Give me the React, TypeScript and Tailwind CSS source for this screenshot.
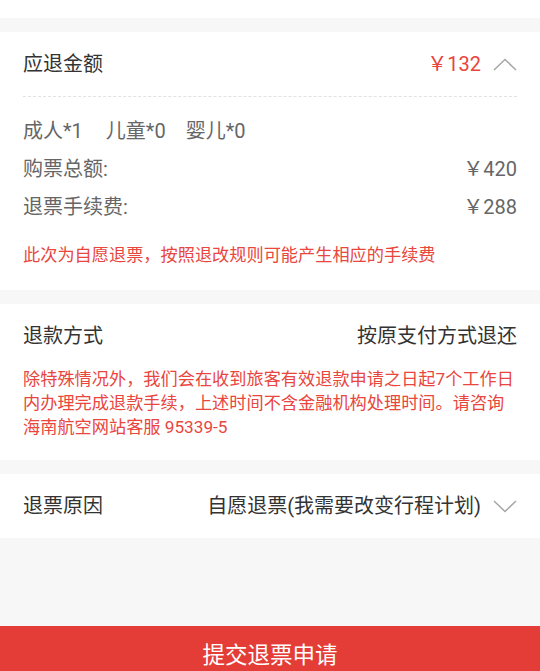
import React from 'react';

const font = { fontFamily: 'Roboto, "Noto Sans CJK SC", sans-serif' };

const Chevron = ({ up }: { up?: boolean }) => (
  <svg width="24" height="13" viewBox="0 0 24 13" className="ml-3 shrink-0">
    <polyline
      points={up ? '1,12 12,1.5 23,12' : '1,1 12,11.5 23,1'}
      fill="none"
      stroke="#a6a6a6"
      strokeWidth="1.5"
    />
  </svg>
);

const RefundPage = () => {
  return (
    <div className="h-[671px] overflow-hidden bg-[#f7f7f7] flex flex-col" style={font}>
      <div className="h-[18px] bg-white shrink-0" />

      {/* refund amount */}
      <div className="mt-[14px] bg-white px-[23px] shrink-0">
        <div className="h-[65px] flex items-center justify-between border-b border-dashed border-[#e2e2e2]">
          <span className="text-[20px] text-[#333]">应退金额</span>
          <div className="flex items-center">
            <span className="text-[20px] text-[#e8443b]">￥132</span>
            <Chevron up />
          </div>
        </div>
        <div className="pt-[15px] text-[20px] text-[#666]">
          <div className="h-[38px] flex items-center">
            <span>成人*1</span>
            <span className="ml-[23px]">儿童*0</span>
            <span className="ml-[20px]">婴儿*0</span>
          </div>
          <div className="h-[38px] flex items-center justify-between">
            <span>购票总额:</span>
            <span>￥420</span>
          </div>
          <div className="h-[38px] flex items-center justify-between">
            <span>退票手续费:</span>
            <span>￥288</span>
          </div>
        </div>
        <p className="mt-[17px] pb-[23px] text-[17.2px] leading-[24px] text-[#e8463e]">
          此次为自愿退票，按照退改规则可能产生相应的手续费
        </p>
      </div>

      {/* refund method */}
      <div className="mt-[14px] bg-white px-[23px] pb-[21px] shrink-0">
        <div className="h-[63px] flex items-center justify-between text-[20px] text-[#333]">
          <span>退款方式</span>
          <span>按原支付方式退还</span>
        </div>
        <p className="text-[17.2px] leading-[24px] text-[#e8463e]">
          除特殊情况外，我们会在收到旅客有效退款申请之日起7个工作日内办理完成退款手续，上述时间不含金融机构处理时间。请咨询海南航空网站客服 95339-5
        </p>
      </div>

      {/* refund reason */}
      <div className="mt-[14px] h-[64px] bg-white px-[23px] flex items-center justify-between text-[20px] text-[#333] shrink-0">
        <span>退票原因</span>
        <div className="flex items-center">
          <span>自愿退票(我需要改变行程计划)</span>
          <Chevron />
        </div>
      </div>

      <div className="h-[88px] shrink-0" />

      <button className="h-[60px] w-full shrink-0 bg-[#e43d37] text-white text-[22.5px] flex items-center justify-center">
        提交退票申请
      </button>
    </div>
  );
};

export default function App() {
  return <RefundPage />;
}
